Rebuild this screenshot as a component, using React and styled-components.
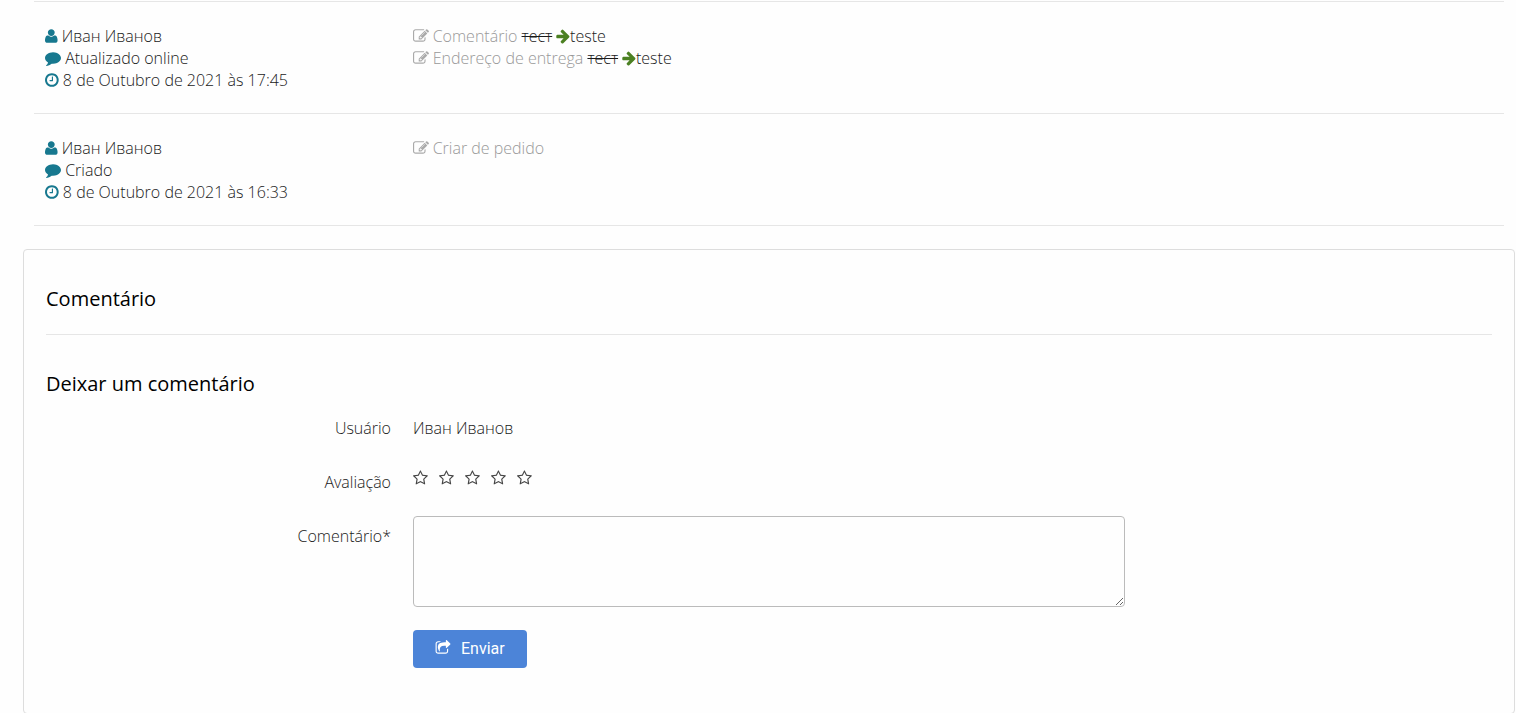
import React, { useState } from "react";
import styled, { createGlobalStyle } from "styled-components";

const GlobalStyle = createGlobalStyle`
  *, *::before, *::after {
    box-sizing: border-box;
  }

  body {
    margin: 0;
    background: #fefefe;
    color: #1a1a1a;
    font-family: "Open Sans", "Noto Sans", sans-serif;
    font-size: 16px;
    font-weight: 300;
    line-height: 22px;
  }
`;

const icons = {
  comment: {
    x: 0,
    width: 1792,
    path: "M1792 896q0 174-120 321.5t-326 233-450 85.5q-70 0-145-8-198 175-460 242-49 14-114 22-17 2-30.5-9t-17.5-29v-1q-3-4-.5-12t2-10 4.5-9.5l6-9 7-8.5 8-9q7-8 31-34.5t34.5-38 31-39.5 32.5-51 27-59 26-76q-157-89-247.5-220t-90.5-281q0-130 71-248.5t191-204.5 286-136.5 348-50.5q244 0 450 85.5t326 233 120 321.5z",
  },
  clock: {
    x: 128,
    width: 1536,
    path: "M1024 544v448q0 14-9 23t-23 9h-320q-14 0-23-9t-9-23v-64q0-14 9-23t23-9h224v-352q0-14 9-23t23-9h64q14 0 23 9t9 23zm416 352q0-148-73-273t-198-198-273-73-273 73-198 198-73 273 73 273 198 198 273 73 273-73 198-198 73-273zm224 0q0 209-103 385.5t-279.5 279.5-385.5 103-385.5-103-279.5-279.5-103-385.5 103-385.5 279.5-279.5 385.5-103 385.5 103 279.5 279.5 103 385.5z",
  },
  edit: {
    x: 0,
    width: 1792,
    path: "M888 1184l116-116-152-152-116 116v56h96v96h56zm440-720q-16-16-33 1l-350 350q-17 17-1 33t33-1l350-350q17-17 1-33zm80 594v190q0 119-84.5 203.5t-203.5 84.5h-832q-119 0-203.5-84.5t-84.5-203.5v-832q0-119 84.5-203.5t203.5-84.5h832q63 0 117 25 15 7 18 23 3 17-9 29l-49 49q-14 14-32 8-23-6-45-6h-832q-66 0-113 47t-47 113v832q0 66 47 113t113 47h832q66 0 113-47t47-113v-126q0-13 9-22l64-64q15-15 35-7t20 29zm-96-738l288 288-672 672h-288v-288zm444 132l-92 92-288-288 92-92q28-28 68-28t68 28l152 152q28 28 28 68t-28 68z",
  },
  arrow: {
    x: 96,
    width: 1536,
    path: "M1600 960q0 54-37 91l-651 651q-39 37-91 37-51 0-90-37l-75-75q-38-38-38-91t38-91l293-293h-704q-52 0-84.5-37.5t-32.5-90.5v-128q0-53 32.5-90.5t84.5-37.5h704l-293-294q-38-36-38-90t38-90l75-75q38-38 90-38 53 0 91 38l651 651q37 35 37 90z",
  },
  star: {
    x: 64,
    width: 1664,
    path: "M1201 1004l306-297-422-62-189-382-189 382-422 62 306 297-73 421 378-199 377 199zm527-357q0 22-26 48l-363 354 86 500q1 7 1 20 0 50-41 50-19 0-40-12l-449-236-449 236q-22 12-40 12-21 0-31.5-14.5t-10.5-35.5q0-6 2-20l86-500-364-354q-25-27-25-48 0-37 56-46l502-73 225-455q19-41 49-41t49 41l225 455 502 73q56 9 56 46z",
  },
  share: {
    x: 0,
    width: 1792,
    path: "M1472 989v259q0 119-84.5 203.5t-203.5 84.5h-832q-119 0-203.5-84.5t-84.5-203.5v-832q0-119 84.5-203.5t203.5-84.5h255q13 0 22.5 9.5t9.5 22.5q0 27-26 32-77 26-133 60-10 4-16 4h-112q-66 0-113 47t-47 113v832q0 66 47 113t113 47h832q66 0 113-47t47-113v-214q0-19 18-29 28-13 54-37 16-16 35-8 21 9 21 31zm237-496l-384 384q-18 19-45 19-12 0-25-5-39-17-39-59v-192h-160q-323 0-438 131-119 137-74 473 3 23-20 34-8 2-12 2-16 0-26-13-10-14-21-31t-39.5-68.5-49.5-99.5-38.5-114-17.5-122q0-49 3.5-91t14-90 28-88 47-81.5 68.5-74 94.5-61.5 124.5-48.5 159.5-30.5 196.5-11h160v-192q0-42 39-59 13-5 25-5 26 0 45 19l384 384q19 19 19 45t-19 45z",
  },
  // drawn with the y axis pointing up
  user: {
    x: 0,
    width: 1408,
    flip: true,
    path: "M1408 131q0 -120 -73 -189.5t-194 -69.5h-874q-121 0 -194 69.5t-73 189.5q0 53 3.5 103.5t14 109t26.5 108.5t43 97.5t62 81t85.5 53.5t111.5 20q9 0 42 -21.5t74.5 -48t108 -48t133.5 -21.5t133.5 21.5t108 48t74.5 48t42 21.5q61 0 111.5 -20t85.5 -53.5t62 -81t43 -97.5t26.5 -108.5t14 -109t3.5 -103.5zM1088 1024q0 -159 -112.5 -271.5t-271.5 -112.5t-271.5 112.5t-112.5 271.5t112.5 271.5t271.5 112.5t271.5 -112.5t112.5 -271.5z",
  },
};

const Svg = styled.svg`
  height: 16px;
  fill: ${({ $color }) => $color || "currentColor"};
  vertical-align: -2px;
`;

const Icon = ({ name, color }) => {
  const { x, width, path, flip } = icons[name];

  return (
    <Svg viewBox={`${x} 0 ${width} 1792`} $color={color} aria-hidden="true">
      <path d={path} transform={flip ? "translate(0 1536) scale(1 -1)" : undefined} />
    </Svg>
  );
};

const Page = styled.main`
  padding: 1px 1px 0 23px;
`;

const History = styled.ul`
  list-style: none;
  margin: 0 11px 23px;
  padding: 0;
  border-top: 1px solid #e6e6e6;
`;

const HistoryRow = styled.li`
  display: grid;
  grid-template-columns: 1fr 3fr;
  padding: 23px 0 22px;
  border-bottom: 1px solid #e6e6e6;
`;

const HistoryCell = styled.div`
  padding: 0 11px;
`;

const Muted = styled.span`
  color: #999;
`;

const Card = styled.section`
  padding: 38px 22px 45px;
  border: 1px solid #ddd;
  border-radius: 4px;
`;

const Title = styled.h2`
  margin: 0;
  color: #000;
  font-size: 20px;
  font-weight: 400;
  line-height: 22px;
`;

const Divider = styled.hr`
  margin: 24px 0 38px;
  border: 0;
  border-top: 1px solid #e6e6e6;
`;

const Form = styled.form`
  display: flex;
  flex-direction: column;
  gap: 23px;
  margin: 13px -11px 0;
`;

const FormRow = styled.div`
  display: grid;
  grid-template-columns: 1fr 2fr 1fr;
`;

const Label = styled.label`
  padding: 9px 11px 0;
  text-align: right;
`;

const Field = styled.div`
  grid-column: 2;
  padding: 0 11px;
`;

const UserName = styled.output`
  display: block;
  padding-top: 9px;
`;

const Rating = styled.div`
  display: flex;
  gap: 11px;
  padding-top: 8px;
`;

const Star = styled.label`
  position: relative;
  display: flex;
  width: 15px;
  color: ${({ $active }) => ($active ? "#e8a317" : "#444")};
  cursor: pointer;
`;

const StarInput = styled.input`
  position: absolute;
  inset: 0;
  width: 100%;
  height: 100%;
  margin: 0;
  opacity: 0;
  cursor: pointer;
`;

const TextArea = styled.textarea`
  display: block;
  width: 100%;
  height: 91px;
  padding: 8px;
  border: 1px solid #bbb;
  border-radius: 4px;
  background: #fefefe;
  color: inherit;
  font: inherit;
  resize: both;
`;

const SubmitButton = styled.button`
  display: inline-flex;
  align-items: center;
  gap: 10px;
  height: 38px;
  padding: 0 22px 2px;
  border: 0;
  border-radius: 4px;
  background: #4c84d8;
  color: #fff;
  font-family: Roboto, sans-serif;
  font-size: 16px;
  font-weight: 400;
  cursor: pointer;
`;

const history = [
  {
    user: "Иван Иванов",
    status: "Atualizado online",
    date: "8 de Outubro de 2021 às 17:45",
    changes: [
      { label: "Comentário", before: "тест", after: "teste" },
      { label: "Endereço de entrega", before: "тест", after: "teste" },
    ],
  },
  {
    user: "Иван Иванов",
    status: "Criado",
    date: "8 de Outubro de 2021 às 16:33",
    changes: [{ label: "Criar de pedido" }],
  },
];

const HistoryItem = ({ item }) => (
  <HistoryRow>
    <HistoryCell>
      <div>
        <Icon name="user" color="#17788f" /> {item.user}
      </div>
      <div>
        <Icon name="comment" color="#17788f" /> {item.status}
      </div>
      <div>
        <Icon name="clock" color="#17788f" /> {item.date}
      </div>
    </HistoryCell>
    <HistoryCell>
      {item.changes.map((change) => (
        <div key={change.label}>
          <Muted>
            <Icon name="edit" color="#aaa" /> {change.label}
          </Muted>
          {change.after && (
            <>
              {" "}
              <del>{change.before}</del> <Icon name="arrow" color="#4b8022" />
              {change.after}
            </>
          )}
        </div>
      ))}
    </HistoryCell>
  </HistoryRow>
);

const App = () => {
  const [rating, setRating] = useState(0);

  return (
    <>
      <GlobalStyle />
      <Page>
        <History>
          {history.map((item) => (
            <HistoryItem key={item.date} item={item} />
          ))}
        </History>

        <Card>
          <Title>Comentário</Title>
          <Divider />
          <Title>Deixar um comentário</Title>

          <Form onSubmit={(e) => e.preventDefault()}>
            <FormRow>
              <Label htmlFor="user">Usuário</Label>
              <Field>
                <UserName id="user">Иван Иванов</UserName>
              </Field>
            </FormRow>
            <FormRow>
              <Label as="span" id="rating">
                Avaliação
              </Label>
              <Field>
                <Rating role="radiogroup" aria-labelledby="rating">
                  {[1, 2, 3, 4, 5].map((value) => (
                    <Star key={value} $active={value <= rating}>
                      <StarInput
                        type="radio"
                        name="rating"
                        value={value}
                        aria-label={value}
                        checked={rating === value}
                        onChange={() => setRating(value)}
                      />
                      <Icon name="star" />
                    </Star>
                  ))}
                </Rating>
              </Field>
            </FormRow>
            <FormRow>
              <Label htmlFor="comment">Comentário*</Label>
              <Field>
                <TextArea id="comment" name="comment" />
              </Field>
            </FormRow>
            <FormRow>
              <Field>
                <SubmitButton type="submit">
                  <Icon name="share" />
                  Enviar
                </SubmitButton>
              </Field>
            </FormRow>
          </Form>
        </Card>
      </Page>
    </>
  );
};

export default App;
